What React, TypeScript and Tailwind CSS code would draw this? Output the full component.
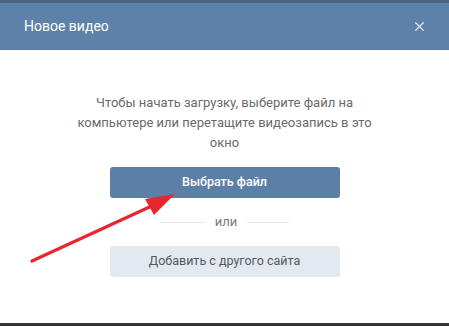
import { X } from "lucide-react";

export default function App() {
  return (
    <div className="relative w-[449px] h-[326px] flex flex-col bg-white overflow-hidden" style={{ fontFamily: "Roboto, 'Open Sans', sans-serif" }}>
      {/* top edge */}
      <div className="h-[3px] bg-[#4b6583]" />

      {/* header */}
      <div className="h-[47px] bg-[#5d81a8] border-b border-[#587b9f] flex items-center justify-between pl-6 pr-[22px]">
        <span className="text-[14px] text-white">Новое видео</span>
        <X className="w-[15px] h-[15px] text-[#dfe7f0]" strokeWidth={2} />
      </div>

      {/* body */}
      <div className="flex-1 flex flex-col items-center pt-[43px]">
        <p className="w-[300px] text-center text-[13px] leading-5 text-[#6a6a6a]">
          Чтобы начать загрузку, выберите файл на компьютере или перетащите видеозапись в это окно
        </p>

        <button className="mt-[14px] w-[230px] h-[31px] rounded-[3px] bg-[#5b7fa7] text-white text-[12.5px] font-medium">
          Выбрать файл
        </button>

        <div className="mt-[14px] h-5 flex items-center gap-[10px]">
          <div className="w-[45px] h-px bg-[#e3e6ea]" />
          <span className="text-[13px] text-[#7a7a7a]">или</span>
          <div className="w-[42px] h-px bg-[#e3e6ea]" />
        </div>

        <button className="mt-[14px] w-[230px] h-[31px] rounded-[3px] bg-[#e4e9ef] text-[#55595e] text-[12.5px]">
          Добавить с другого сайта
        </button>
      </div>

      {/* bottom edge */}
      <div className="h-[3px] bg-[#353535]" />

      {/* red arrow annotation */}
      <svg className="absolute left-0 top-0 pointer-events-none" width="449" height="326" viewBox="0 0 449 326">
        <line x1="32" y1="261" x2="156" y2="204" stroke="#e8262f" strokeWidth="3.2" strokeLinecap="round" />
        <polygon points="175,194 145,199 154,215" fill="#e8262f" />
      </svg>
    </div>
  );
}
